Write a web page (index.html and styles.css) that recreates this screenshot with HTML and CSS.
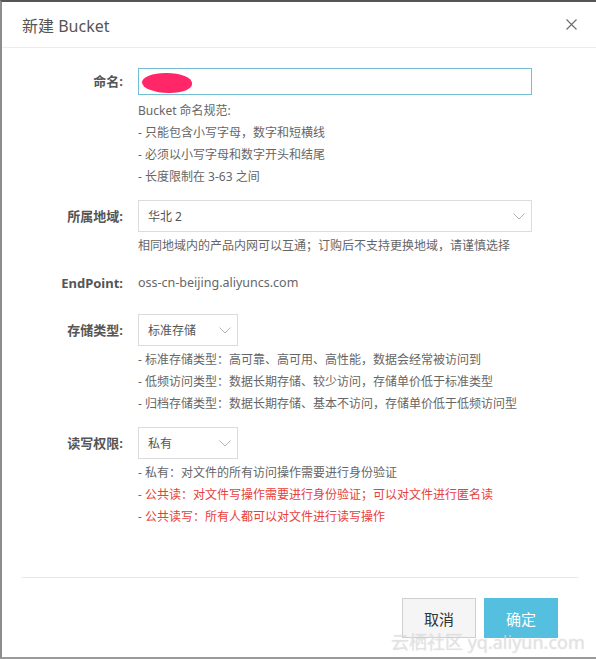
FILE: index.html
```html
<!DOCTYPE html>
<html lang="zh-CN">
<head>
    <meta charset="UTF-8">
    <title>新建 Bucket</title>
    <link rel="stylesheet" href="styles.css">
</head>
<body>
    <div class="dialog">
        <div class="dialog-header">
            <span class="dialog-title">新建 Bucket</span>
            <svg class="close" width="11" height="11" viewBox="0 0 11 11">
                <path d="M0.5 0.5 L10.5 10.5 M10.5 0.5 L0.5 10.5" stroke="#6f6f6f" stroke-width="1.2" fill="none"/>
            </svg>
        </div>

        <div class="dialog-body">
            <div class="form-row">
                <label class="form-label label-input">命名:</label>
                <div class="form-control">
                    <div class="input-wrap">
                        <input type="text" class="text-input">
                        <span class="redact"></span>
                    </div>
                    <div class="help">
                        <div>Bucket 命名规范:</div>
                        <div>- 只能包含小写字母，数字和短横线</div>
                        <div>- 必须以小写字母和数字开头和结尾</div>
                        <div>- 长度限制在 3-63 之间</div>
                    </div>
                </div>
            </div>

            <div class="form-row">
                <label class="form-label">所属地域:</label>
                <div class="form-control">
                    <div class="select select-wide">
                        <span>华北 2</span>
                        <svg width="12" height="7" viewBox="0 0 12 7"><polyline points="0.5,0.5 6,6 11.5,0.5" stroke="#b5b5b5" stroke-width="1" fill="none"/></svg>
                    </div>
                    <div class="help">
                        <div>相同地域内的产品内网可以互通；订购后不支持更换地域，请谨慎选择</div>
                    </div>
                </div>
            </div>

            <div class="form-row row-endpoint">
                <label class="form-label label-text">EndPoint:</label>
                <div class="form-control endpoint">oss-cn-beijing.aliyuncs.com</div>
            </div>

            <div class="form-row">
                <label class="form-label">存储类型:</label>
                <div class="form-control">
                    <div class="select select-small">
                        <span>标准存储</span>
                        <svg width="12" height="7" viewBox="0 0 12 7"><polyline points="0.5,0.5 6,6 11.5,0.5" stroke="#b5b5b5" stroke-width="1" fill="none"/></svg>
                    </div>
                    <div class="help">
                        <div>- 标准存储类型：高可靠、高可用、高性能，数据会经常被访问到</div>
                        <div>- 低频访问类型：数据长期存储、较少访问，存储单价低于标准类型</div>
                        <div>- 归档存储类型：数据长期存储、基本不访问，存储单价低于低频访问型</div>
                    </div>
                </div>
            </div>

            <div class="form-row">
                <label class="form-label">读写权限:</label>
                <div class="form-control">
                    <div class="select select-small">
                        <span>私有</span>
                        <svg width="12" height="7" viewBox="0 0 12 7"><polyline points="0.5,0.5 6,6 11.5,0.5" stroke="#b5b5b5" stroke-width="1" fill="none"/></svg>
                    </div>
                    <div class="help">
                        <div>- 私有：对文件的所有访问操作需要进行身份验证</div>
                        <div class="warn">- 公共读：对文件写操作需要进行身份验证；可以对文件进行匿名读</div>
                        <div class="warn">- 公共读写：所有人都可以对文件进行读写操作</div>
                    </div>
                </div>
            </div>
        </div>

        <div class="dialog-footer">
            <button class="btn btn-cancel">取消</button>
            <button class="btn btn-primary">确定</button>
        </div>

        <div class="watermark">云栖社区 yq.aliyun.com</div>
    </div>
</body>
</html>
```

FILE: styles.css
```css
body {
    margin: 0;
    padding: 0;
    background-color: #fff;
    font-family: "Noto Sans", "Noto Sans CJK SC", sans-serif;
    font-size: 12px;
    color: #666;
}

.dialog {
    position: relative;
    width: 596px;
    height: 659px;
    box-sizing: border-box;
    border-top: 2px solid #555;
    border-left: 2px solid #8d8d8d;
    border-bottom: 2px solid #9a9a9a;
    background-color: #fff;
    display: flex;
    flex-direction: column;
    overflow: hidden;
}

.dialog-header {
    height: 45px;
    padding: 0 19px 0 20px;
    border-bottom: 1px solid #ececec;
    display: flex;
    align-items: center;
    justify-content: space-between;
}

.dialog-title {
    font-size: 16px;
    color: #555;
}

.close {
    display: block;
}

.dialog-body {
    flex: 1;
    padding-top: 20px;
}

.form-row {
    display: grid;
    grid-template-columns: 121px 1fr;
    column-gap: 15px;
    margin-bottom: 12px;
}

.form-label {
    text-align: right;
    font-size: 13px;
    font-weight: bold;
    color: #555;
    line-height: 32px;
}

.label-input {
    line-height: 27px;
}

.label-text {
    line-height: 22px;
}

.input-wrap {
    position: relative;
    width: 394px;
}

.text-input {
    display: block;
    width: 394px;
    height: 27px;
    box-sizing: border-box;
    border: 1px solid #74bdd3;
    padding: 0 8px;
    outline: none;
}

.redact {
    position: absolute;
    left: 4px;
    top: 5px;
    width: 50px;
    height: 20px;
    background-color: #ff2768;
    border-radius: 48% 52% 45% 55%;
}

.select {
    height: 32px;
    box-sizing: border-box;
    border: 1px solid #dcdcdc;
    padding: 0 6px 1px 9px;
    display: flex;
    align-items: center;
    justify-content: space-between;
    color: #555;
}

.select svg {
    margin-top: 2px;
}

.select-wide {
    width: 394px;
}

.select-small {
    width: 100px;
}

.help {
    margin-top: 3px;
    line-height: 22px;
    color: #666;
}

.input-wrap + .help {
    margin-top: 5px;
}

.warn {
    color: #e8403a;
}

.row-endpoint {
    padding: 3px 0 8px;
}

.endpoint {
    line-height: 22px;
    font-size: 12.5px;
    color: #666;
}

.dialog-footer {
    margin: 0 18px 0 20px;
    border-top: 1px solid #e8e8e8;
    padding: 20px 20px 19px 0;
    display: flex;
    justify-content: flex-end;
    gap: 8px;
}

.btn {
    width: 74px;
    height: 40px;
    font-family: "Noto Sans CJK SC", sans-serif;
    font-size: 15px;
    border: 1px solid transparent;
    cursor: pointer;
}

.btn-cancel {
    background-color: #f5f5f5;
    border-color: #cfcfcf;
    color: #333;
}

.btn-primary {
    background-color: #55bfe0;
    color: #fff;
}

.watermark {
    position: absolute;
    left: 389px;
    top: 626px;
    font-size: 18px;
    white-space: nowrap;
    color: rgba(228, 228, 228, 0.7);
    text-shadow: 0 0 1px rgba(140, 140, 140, 0.3);
}
```
